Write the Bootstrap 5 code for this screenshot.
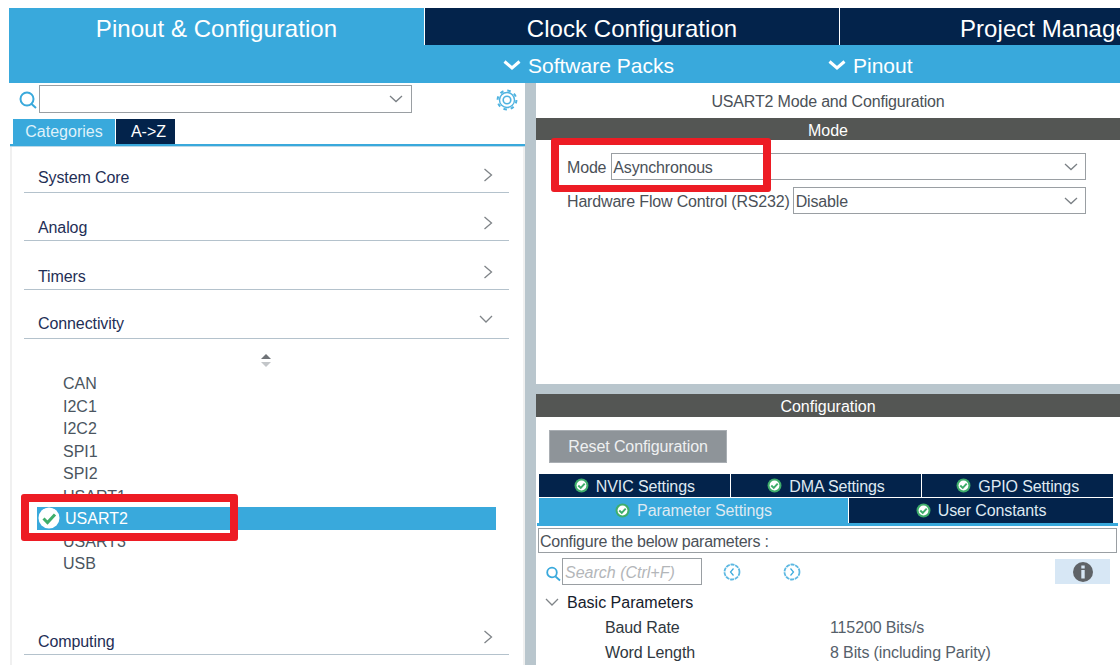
<!DOCTYPE html>
<html lang="en">
<head>
<meta charset="utf-8">
<title>USART2 Mode and Configuration</title>
<link href="https://cdn.jsdelivr.net/npm/bootstrap@5.3.0/dist/css/bootstrap.min.css" rel="stylesheet">
<style>
html,body{height:100%;overflow:hidden;background:#fff}
body{font-family:"Liberation Sans",Arial,sans-serif;font-size:16px;color:#3f4a55}
.shell{position:relative;height:665px;width:1120px;overflow:hidden;padding:8px 0 0 9px}
.ic{display:block;flex:none}
.mtabs{height:37px}
.mtab{height:37px;background:#03234b;color:#fff;font-size:24px;line-height:41px;white-space:nowrap;text-align:center;overflow:hidden;letter-spacing:.05px}
.mtab-a{width:415px;background:#39a9dc}
.mtab-b{width:414px;margin-left:1px}
.mtab-c{flex:1;margin-left:1px;text-align:left;padding-left:120px}
.subbar{height:38px;background:#39a9dc;color:#fff;font-size:21px}
.subitem{line-height:42px;gap:7px}
.subitem span{padding-top:4px}
.subitem svg{margin-top:2px}
.sub-1{margin-left:494px;width:325px}
.work{height:582px}
.leftp{width:516px;flex:none}
.split{width:11px;flex:none;background:#b9c6cd}
.rightp{flex:1;min-width:0}
.searchrow{height:36px;padding-left:10px}
.combo{border:1px solid #9a9fa3;background:#fff;height:28px;margin-top:2px;margin-bottom:6px}
.combo-l{width:373px;margin-left:2px}
.gearbox{margin-left:84px;margin-top:2px}
.ltabs{height:25px;padding-left:4px}
.ltab{height:25px;font-size:16px;line-height:26px;text-align:center;color:#dff1fa}
.ltab-a{width:102px;background:#39a9dc}
.ltab-b{width:59px;background:#03234b;margin-left:1px;color:#fff;padding-left:6px}
.lline{height:3px;border-top:2px solid #39a9dc;border-bottom:1px solid #bcd9e8;margin-left:1px}
.lbody{border-left:2px solid #f0f0f0;border-right:2px solid #f0f0f0;margin-left:1px;height:518px;padding:0 14px 0 12px}
.acc{height:49px;border-bottom:1px solid #b4c2cc;padding:0 16px 0 14px;color:#1f2f56;line-height:20px;align-items:flex-end;letter-spacing:-.1px}
.acc-s{height:46px}
.acc-t{height:48px}
.acc-c{padding-bottom:4px}
.acc-l{padding-bottom:2px}
.acc-i{margin-bottom:10px}
.acc-d{margin-bottom:14px}
.sortwrap{height:33px;padding-top:15px}
.sortwrap svg{margin-left:236px}
.pl{color:#4a5560;line-height:24.5px;height:22.5px;padding-left:39px}
.pl-sel{background:#39a9dc;color:#fff;padding-left:1px;width:459px;margin-left:13px;height:22.5px;line-height:22.5px;gap:5px}
.pl-sel span{padding-top:2px}
.pl-sp{height:31.5px}
.ttl{height:35px;line-height:38px;text-align:center;color:#4b5158;letter-spacing:-.17px}
.hbar{background:#545654;color:#fff;text-align:center;height:22px;line-height:26px}
.hbar-2{height:23px}
.modearea{height:244px;padding:13px 34px 0 31px}
.frow{height:27px;margin-bottom:7px;color:#4b5158;gap:3px;line-height:29px;letter-spacing:-.17px}
.fmode{margin-right:2px}
.combo-r{flex:1;height:27px;margin:0;padding:0 7px 0 1px;color:#4b5158}
.combo-r span{padding-top:2px}
.combo-r2{padding-left:2px}
.csplit{height:10px;background:#b9c6cd}
.resetwrap{padding:13px 0 11px 13px}
.resetbtn{width:178px;height:33px;border-radius:0;border:1px solid #a9aeb3;background:#8e9499;color:#eef0f1;font-size:16px;padding:0;line-height:31px;letter-spacing:-.1px}
.resetbtn:hover{background:#8e9499;color:#eef0f1}
.ctabs{margin:0 7px 0 3px}
.ctab{height:23px;background:#03234b;color:#dfe9f2;line-height:23px;gap:7px;flex:1 1 0;letter-spacing:-.12px}
.ctab span{padding-top:2px}
.ctab+.ctab{margin-left:1px}
.ctabs2{margin-top:1px}
.ctab2{height:25px;line-height:25px;flex:none}
.ctab2 span{padding-top:0}
.ctab-p{width:309px;background:#39a9dc}
.ctab-u{flex:1}
.cline{height:3px;background:#39a9dc;margin:0 2px 0 1px}
.cfgbox{height:25px;margin:2px 3px 0 2px;border:1px solid #9a9fa3;line-height:26px;padding-left:1px;color:#4b5158;letter-spacing:-.25px}
.findrow{height:27px;margin-top:5px;padding-left:9px}
.find{width:140px;height:27px;border:1px solid #9a9fa3;margin-left:1px;font-style:italic;color:#b3b6b9;line-height:28px;padding-left:2px}
.nv1{margin-left:21px;margin-top:5px}
.nv2{margin-left:42px;margin-top:5px}
.infobox{width:55px;height:25px;background:#d7e7f5;margin-left:254px;margin-top:1px}
.ptree{padding-top:4px}
.pgrp{height:26px;line-height:26px;color:#16202c;padding-left:9px;gap:8px}
.pgrp span{padding-top:2px}
.prow{height:25px;line-height:25px;padding-left:69px;color:#2f3840;letter-spacing:-.12px}
.pname{width:225px}
.pval{color:#55606a}
.redbox{position:absolute;border:8px solid #ed1c24;border-radius:3px;pointer-events:none}
.red-1{left:21px;top:494px;width:217px;height:47px}
.red-2{left:551px;top:138px;width:220px;height:54px;border-width:7px 8px}
</style>
</head>
<body>
<div class="shell">
  <div class="mtabs d-flex">
    <div class="mtab mtab-a">Pinout &amp; Configuration</div>
    <div class="mtab mtab-b">Clock Configuration</div>
    <div class="mtab mtab-c">Project Manager</div>
  </div>
  <div class="subbar d-flex">
    <div class="subitem sub-1 d-flex align-items-center">
      <svg class="ic" width="18" height="12" viewBox="0 0 18 12"><path d="M1.500 2.500 9 9l7.500-6.500" fill="none" stroke="#fff" stroke-width="3"/></svg>
      <span>Software Packs</span>
    </div>
    <div class="subitem d-flex align-items-center">
      <svg class="ic" width="18" height="12" viewBox="0 0 18 12"><path d="M1.500 2.500 9 9l7.500-6.500" fill="none" stroke="#fff" stroke-width="3"/></svg>
      <span>Pinout</span>
    </div>
  </div>
  <div class="work d-flex">
    <div class="leftp">
      <div class="searchrow d-flex">
        <svg class="ic mt-2" width="18" height="20" viewBox="0 0 18 20"><circle cx="8" cy="8" r="6.500" fill="none" stroke="#39a9dc" stroke-width="2"/><path d="M12 12.500 17 17" stroke="#39a9dc" stroke-width="2"/></svg>
        <div class="combo combo-l d-flex align-items-center justify-content-end pe-2">
          <svg class="ic" width="14" height="8" viewBox="0 0 14 8"><path d="M1 1l6 5.500L13 1" fill="none" stroke="#7b8085" stroke-width="1.300"/></svg>
        </div>
        <div class="gearbox pt-1">
          <svg class="ic" width="22" height="22" viewBox="0 0 22 22"><g fill="none" stroke="#4fb3e0"><circle cx="11" cy="11" r="3.800" stroke-width="1.600"/><circle cx="11" cy="11" r="7.500" stroke-width="1.400"/><circle cx="11" cy="11" r="9.400" stroke-width="2" stroke-dasharray="3.500 3.880"/></g></svg>
        </div>
      </div>
      <div class="ltabs d-flex">
        <div class="ltab ltab-a">Categories</div>
        <div class="ltab ltab-b">A-&gt;Z</div>
      </div>
      <div class="lline"></div>
      <div class="lbody">
        <div class="acc acc-s d-flex justify-content-between"><span class="acc-c">System Core</span>
          <svg class="ic acc-i" width="10" height="14" viewBox="0 0 10 14"><path d="M1.500 1l7 6-7 6" fill="none" stroke="#7f8488" stroke-width="1.300"/></svg></div>
        <div class="acc acc-t d-flex justify-content-between"><span class="acc-l">Analog</span>
          <svg class="ic acc-i" width="10" height="14" viewBox="0 0 10 14"><path d="M1.500 1l7 6-7 6" fill="none" stroke="#7f8488" stroke-width="1.300"/></svg></div>
        <div class="acc d-flex justify-content-between"><span class="acc-l">Timers</span>
          <svg class="ic acc-i" width="10" height="14" viewBox="0 0 10 14"><path d="M1.500 1l7 6-7 6" fill="none" stroke="#7f8488" stroke-width="1.300"/></svg></div>
        <div class="acc d-flex justify-content-between"><span class="acc-c">Connectivity</span>
          <svg class="ic acc-d" width="14" height="9" viewBox="0 0 14 9"><path d="M1 1l6 6 6-6" fill="none" stroke="#7f8488" stroke-width="1.300"/></svg></div>
        <div class="sortwrap"><svg class="ic" width="12" height="14" viewBox="0 0 12 14"><path d="M6 0l5 5H1z" fill="#6f7377"/><path d="M1 8h10l-5 5z" fill="#c3c6c9"/></svg></div>
        <div>
          <div class="pl">CAN</div>
          <div class="pl">I2C1</div>
          <div class="pl">I2C2</div>
          <div class="pl">SPI1</div>
          <div class="pl">SPI2</div>
          <div class="pl">USART1</div>
          <div class="pl pl-sel d-flex align-items-center">
            <svg class="ic" width="22" height="22" viewBox="0 0 22 22"><circle cx="11" cy="11" r="10.500" fill="#fff"/><path d="M5.500 11.500l4 4 7.500-8" fill="none" stroke="#3fae6b" stroke-width="3"/></svg>
            <span>USART2</span>
          </div>
          <div class="pl">USART3</div>
          <div class="pl">USB</div>
        </div>
        <div class="pl-sp"></div>
        <div class="acc d-flex justify-content-between"><span class="acc-l">Computing</span>
          <svg class="ic acc-i" width="10" height="14" viewBox="0 0 10 14"><path d="M1.500 1l7 6-7 6" fill="none" stroke="#7f8488" stroke-width="1.300"/></svg></div>
      </div>
    </div>
    <div class="split"></div>
    <div class="rightp">
      <div class="ttl">USART2 Mode and Configuration</div>
      <div class="hbar">Mode</div>
      <div class="modearea">
        <div class="frow d-flex">
          <span class="fmode">Mode</span>
          <div class="combo combo-r d-flex justify-content-between align-items-center"><span>Asynchronous</span>
            <svg class="ic" width="14" height="8" viewBox="0 0 14 8"><path d="M1 1l6 5.500L13 1" fill="none" stroke="#7b8085" stroke-width="1.300"/></svg></div>
        </div>
        <div class="frow d-flex">
          <span>Hardware Flow Control (RS232)</span>
          <div class="combo combo-r combo-r2 d-flex justify-content-between align-items-center"><span>Disable</span>
            <svg class="ic" width="14" height="8" viewBox="0 0 14 8"><path d="M1 1l6 5.500L13 1" fill="none" stroke="#7b8085" stroke-width="1.300"/></svg></div>
        </div>
      </div>
      <div class="csplit"></div>
      <div class="hbar hbar-2">Configuration</div>
      <div class="resetwrap"><button type="button" class="btn resetbtn">Reset Configuration</button></div>
      <div class="ctabs d-flex">
        <div class="ctab d-flex justify-content-center align-items-center">
          <svg class="ic" width="15" height="15" viewBox="0 0 14 14"><circle cx="7" cy="7" r="6.500" fill="#3fae6b"/><circle cx="7" cy="7" r="4.600" fill="#fff"/><path d="M4 7l2.300 2.300L10 5.200" fill="none" stroke="#3fae6b" stroke-width="1.800"/></svg><span>NVIC Settings</span></div>
        <div class="ctab d-flex justify-content-center align-items-center">
          <svg class="ic" width="15" height="15" viewBox="0 0 14 14"><circle cx="7" cy="7" r="6.500" fill="#3fae6b"/><circle cx="7" cy="7" r="4.600" fill="#fff"/><path d="M4 7l2.300 2.300L10 5.200" fill="none" stroke="#3fae6b" stroke-width="1.800"/></svg><span>DMA Settings</span></div>
        <div class="ctab d-flex justify-content-center align-items-center">
          <svg class="ic" width="15" height="15" viewBox="0 0 14 14"><circle cx="7" cy="7" r="6.500" fill="#3fae6b"/><circle cx="7" cy="7" r="4.600" fill="#fff"/><path d="M4 7l2.300 2.300L10 5.200" fill="none" stroke="#3fae6b" stroke-width="1.800"/></svg><span>GPIO Settings</span></div>
      </div>
      <div class="ctabs ctabs2 d-flex">
        <div class="ctab ctab2 ctab-p d-flex justify-content-center align-items-center">
          <svg class="ic" width="15" height="15" viewBox="0 0 14 14"><circle cx="7" cy="7" r="6.500" fill="#3fae6b"/><circle cx="7" cy="7" r="4.600" fill="#fff"/><path d="M4 7l2.300 2.300L10 5.200" fill="none" stroke="#3fae6b" stroke-width="1.800"/></svg><span>Parameter Settings</span></div>
        <div class="ctab ctab2 ctab-u d-flex justify-content-center align-items-center">
          <svg class="ic" width="15" height="15" viewBox="0 0 14 14"><circle cx="7" cy="7" r="6.500" fill="#3fae6b"/><circle cx="7" cy="7" r="4.600" fill="#fff"/><path d="M4 7l2.300 2.300L10 5.200" fill="none" stroke="#3fae6b" stroke-width="1.800"/></svg><span>User Constants</span></div>
      </div>
      <div class="cline"></div>
      <div class="cfgbox">Configure the below parameters :</div>
      <div class="findrow d-flex align-items-start">
        <svg class="ic mt-2" width="16" height="16" viewBox="0 0 16 16"><circle cx="7" cy="6.500" r="4.800" fill="none" stroke="#39a9dc" stroke-width="1.800"/><path d="M10.500 10.500 15 14.500" stroke="#39a9dc" stroke-width="1.800"/></svg>
        <div class="find">Search (Ctrl+F)</div>
        <svg class="ic nv1" width="18" height="18" viewBox="0 0 18 18"><circle cx="9" cy="9" r="7.500" fill="none" stroke="#5cb8e2" stroke-width="1.800" stroke-dasharray="4 .8"/><path d="M10.500 5.500 7.500 9l3 3.500" fill="none" stroke="#39a9dc" stroke-width="1.200"/></svg>
        <svg class="ic nv2" width="18" height="18" viewBox="0 0 18 18"><circle cx="9" cy="9" r="7.500" fill="none" stroke="#5cb8e2" stroke-width="1.800" stroke-dasharray="4 .8"/><path d="M7.500 5.500l3 3.500-3 3.500" fill="none" stroke="#39a9dc" stroke-width="1.200"/></svg>
        <div class="infobox d-flex align-items-center justify-content-center">
          <svg class="ic" width="20" height="20" viewBox="0 0 20 20"><circle cx="10" cy="10" r="10" fill="#5f6367"/><rect x="8.300" y="3.500" width="3.400" height="3" fill="#d7e7f5"/><rect x="8.300" y="8" width="3.400" height="8.500" fill="#d7e7f5"/></svg>
        </div>
      </div>
      <div class="ptree">
        <div class="pgrp d-flex align-items-center">
          <svg class="ic" width="14" height="9" viewBox="0 0 14 9"><path d="M1 1l6 6 6-6" fill="none" stroke="#7f8488" stroke-width="1.300"/></svg>
          <span>Basic Parameters</span>
        </div>
        <div class="prow d-flex"><span class="pname">Baud Rate</span><span class="pval">115200 Bits/s</span></div>
        <div class="prow d-flex"><span class="pname">Word Length</span><span class="pval">8 Bits (including Parity)</span></div>
      </div>
    </div>
  </div>
  <div class="redbox red-1"></div>
  <div class="redbox red-2"></div>
</div>
<script src="https://cdn.jsdelivr.net/npm/bootstrap@5.3.0/dist/js/bootstrap.bundle.min.js"></script>
</body>
</html>
